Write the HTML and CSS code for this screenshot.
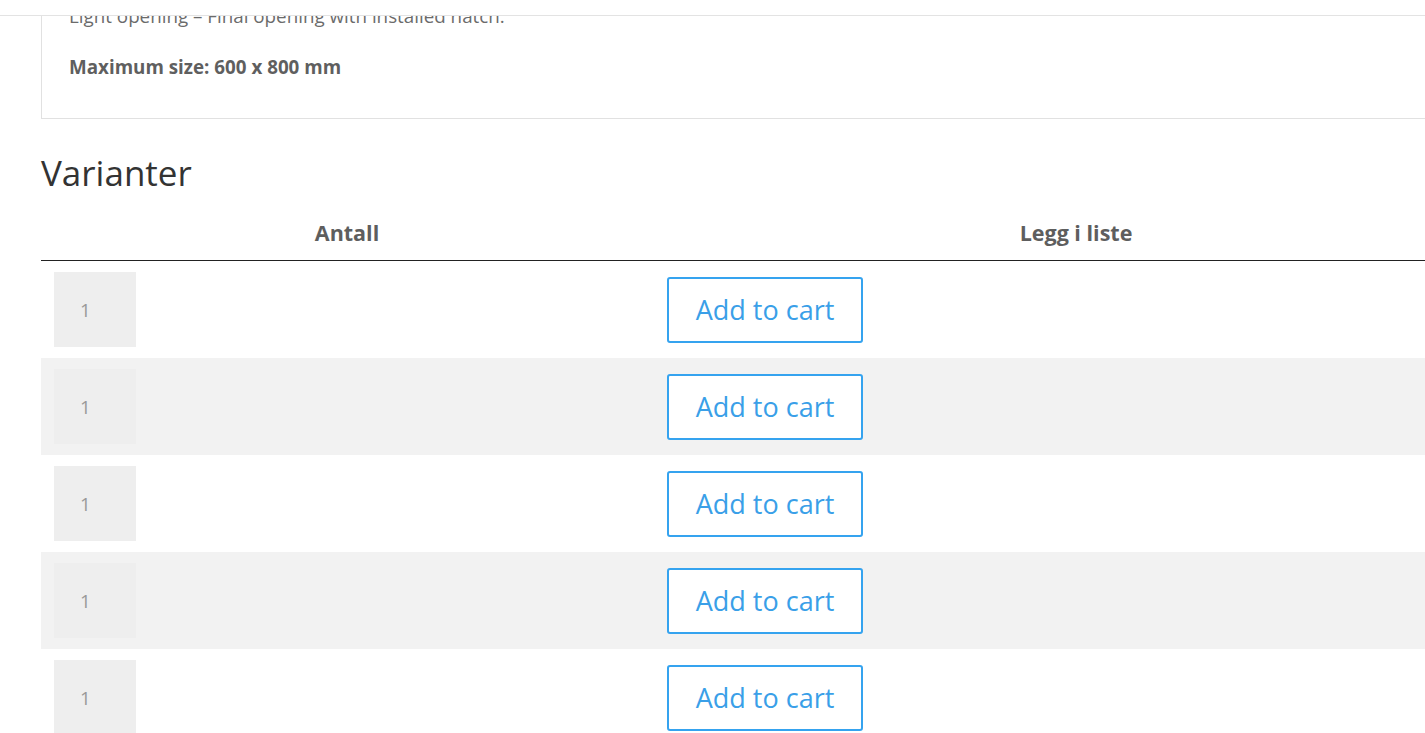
FILE: index.html
```html
<!DOCTYPE html>
<html lang="no">
<head>
<meta charset="utf-8">
<title>Varianter</title>
<link rel="stylesheet" href="styles.css">
</head>
<body>
<header class="topbar"></header>
<main class="content">
  <section class="description">
    <p>Light opening – Final opening with installed hatch.</p>
    <p><strong>Maximum size: 600 x 800 mm</strong></p>
  </section>
  <h2 class="variants-title">Varianter</h2>
  <table class="variants">
    <thead>
      <tr>
        <th class="col-qty">Antall</th>
        <th class="col-list">Legg i liste</th>
      </tr>
    </thead>
    <tbody>
      <tr>
        <td><input class="qty" type="text" value="1"></td>
        <td><button class="cart-btn" type="button">Add to cart</button></td>
      </tr>
      <tr>
        <td><input class="qty" type="text" value="1"></td>
        <td><button class="cart-btn" type="button">Add to cart</button></td>
      </tr>
      <tr>
        <td><input class="qty" type="text" value="1"></td>
        <td><button class="cart-btn" type="button">Add to cart</button></td>
      </tr>
      <tr>
        <td><input class="qty" type="text" value="1"></td>
        <td><button class="cart-btn" type="button">Add to cart</button></td>
      </tr>
      <tr>
        <td><input class="qty" type="text" value="1"></td>
        <td><button class="cart-btn" type="button">Add to cart</button></td>
      </tr>
    </tbody>
  </table>
</main>
</body>
</html>
```
FILE: styles.css
```css
html, body {
  margin: 0;
  padding: 0;
  overflow: hidden;
  background: #fff;
}
body {
  font-family: "Open Sans", "Noto Sans", sans-serif;
  color: #666;
  font-size: 18.8px;
}
.topbar {
  position: fixed;
  top: 0;
  left: 0;
  right: 0;
  height: 15px;
  background: #fff;
  border-bottom: 1px solid #e3e3e3;
  z-index: 10;
}
.content {
  margin-left: 41px;
  width: 1458px;
}
.description {
  border: 1px solid #e1e1e1;
  border-top: 0;
  padding: 4px 28px 12px 27px;
}
.description p {
  margin: 0 0 25.6px;
  line-height: 25.6px;
  color: #6b6b6b;
}
.description strong {
  color: #5f5f5f;
  font-weight: 700;
}
.variants-title {
  margin: 32px 0 11px;
  font-size: 35px;
  font-weight: 400;
  line-height: 43px;
  color: #333;
}
.variants {
  width: 1458px;
  border-collapse: collapse;
  table-layout: fixed;
}
.variants th {
  box-sizing: border-box;
  font-size: 21.5px;
  font-weight: 700;
  line-height: 32px;
  color: #5e5e5e;
  padding: 12px 14px 11px;
  text-align: center;
  border-bottom: 1px solid #222;
}
.col-qty { width: 612px; }
.col-list { width: 846px; }
.variants td {
  padding: 11px 13px;
  vertical-align: middle;
}
.variants td + td {
  padding-left: 14px;
}
.variants tbody tr:nth-child(even) {
  background: #f2f2f2;
}
.qty {
  display: block;
  box-sizing: border-box;
  width: 82px;
  height: 75px;
  border: 0;
  background: #eee;
  padding: 0 0 0 26px;
  font-family: "Open Sans", "Noto Sans", sans-serif;
  font-size: 18.8px;
  color: #999;
  outline: none;
}
.cart-btn {
  display: block;
  box-sizing: border-box;
  width: 196px;
  height: 66px;
  border: 2px solid #35a3ef;
  border-radius: 3px;
  background: #fff;
  color: #3a9fe8;
  font-family: "Open Sans", "Noto Sans", sans-serif;
  font-size: 27px;
  font-weight: 400;
  padding: 0 10px;
  cursor: pointer;
}
```
